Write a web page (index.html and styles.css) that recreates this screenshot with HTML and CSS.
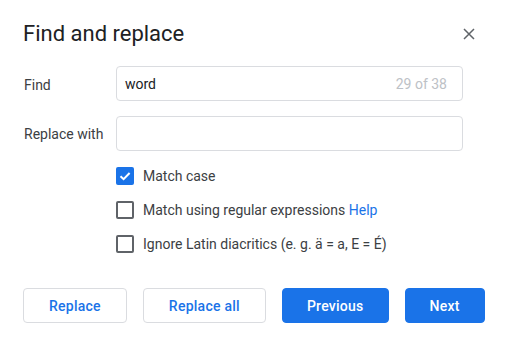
FILE: index.html
```html
<!DOCTYPE html>
<html>
<head>
<meta charset="utf-8">
<link rel="stylesheet" href="styles.css">
</head>
<body>
<div class="dialog">
  <div class="header">
    <h1 class="title">Find and replace</h1>
    <button class="close" aria-label="Close">
      <svg width="12" height="12" viewBox="0 0 12 12"><path d="M1 1L11 11M11 1L1 11" stroke="#5f6368" stroke-width="1.5" fill="none"/></svg>
    </button>
  </div>
  <div class="field">
    <label class="label find-label">Find</label>
    <div class="input"><span class="value">word</span><span class="count">29 of 38</span></div>
  </div>
  <div class="field">
    <label class="label">Replace with</label>
    <div class="input"></div>
  </div>
  <div class="options">
    <div class="option">
      <span class="box checked"><svg width="18" height="18" viewBox="0 0 18 18"><path d="M4.5 9.2L7.6 12.2L13.6 6" stroke="#fff" stroke-width="2" fill="none"/></svg></span>
      <span class="text">Match case</span>
    </div>
    <div class="option">
      <span class="box"></span>
      <span class="text">Match using regular expressions <a class="help">Help</a></span>
    </div>
    <div class="option">
      <span class="box"></span>
      <span class="text">Ignore Latin diacritics (e. g. ä = a, E = É)</span>
    </div>
  </div>
  <div class="actions">
    <button class="btn">Replace</button>
    <button class="btn">Replace all</button>
    <button class="btn primary">Previous</button>
    <button class="btn primary">Next</button>
  </div>
</div>
</body>
</html>
```
FILE: styles.css
```css
html, body {
  margin: 0;
  padding: 0;
  background: #fff;
}
.dialog {
  width: 508px;
  height: 348px;
  box-sizing: border-box;
  padding: 19px 23px 0 23px;
  font-family: Roboto, "Liberation Sans", sans-serif;
  color: #3c4043;
}
.header {
  display: flex;
  align-items: center;
  justify-content: space-between;
  height: 29px;
}
.title {
  margin: 0;
  font-size: 22px;
  font-weight: 400;
  line-height: 28px;
  color: #202124;
}
.close {
  border: 0;
  background: none;
  padding: 0;
  margin-right: 10px;
  width: 12px;
  height: 12px;
  display: flex;
}
.field {
  display: flex;
  align-items: center;
  margin-top: 18px;
}
.field + .field {
  margin-top: 15px;
}
.label {
  width: 93px;
  padding-left: 1px;
  box-sizing: border-box;
  font-size: 14px;
  color: #3c4043;
}
.find-label {
  padding-top: 3px;
}
.input {
  width: 347px;
  height: 35px;
  box-sizing: border-box;
  border: 1px solid #dadce0;
  border-radius: 4px;
  display: flex;
  align-items: center;
  justify-content: space-between;
  padding: 0 15px 0 8px;
  font-size: 14px;
}
.value {
  color: #202124;
}
.count {
  color: #bdc1c6;
}
.options {
  margin-top: 8px;
  padding-left: 93px;
}
.option {
  display: flex;
  align-items: center;
  height: 34px;
  font-size: 14px;
}
.box {
  width: 18px;
  height: 18px;
  box-sizing: border-box;
  border: 2px solid #5f6368;
  border-radius: 2px;
  margin-right: 9px;
  flex: none;
}
.box.checked {
  border: 0;
  background: #1a73e8;
}
.box svg {
  display: block;
}
.text {
  color: #3c4043;
}
.help {
  color: #1a73e8;
}
.actions {
  display: flex;
  gap: 16px;
  margin-top: 27px;
}
.btn {
  height: 35px;
  box-sizing: border-box;
  padding: 0 25px;
  border: 1px solid #dadce0;
  border-radius: 4px;
  background: #fff;
  color: #1a73e8;
  font-family: Roboto, "Liberation Sans", sans-serif;
  font-size: 14px;
  font-weight: 500;
  letter-spacing: 0.25px;
}
.btn.primary {
  padding: 0 24px;
  background: #1a73e8;
  border-color: #1a73e8;
  color: #fff;
}
```
